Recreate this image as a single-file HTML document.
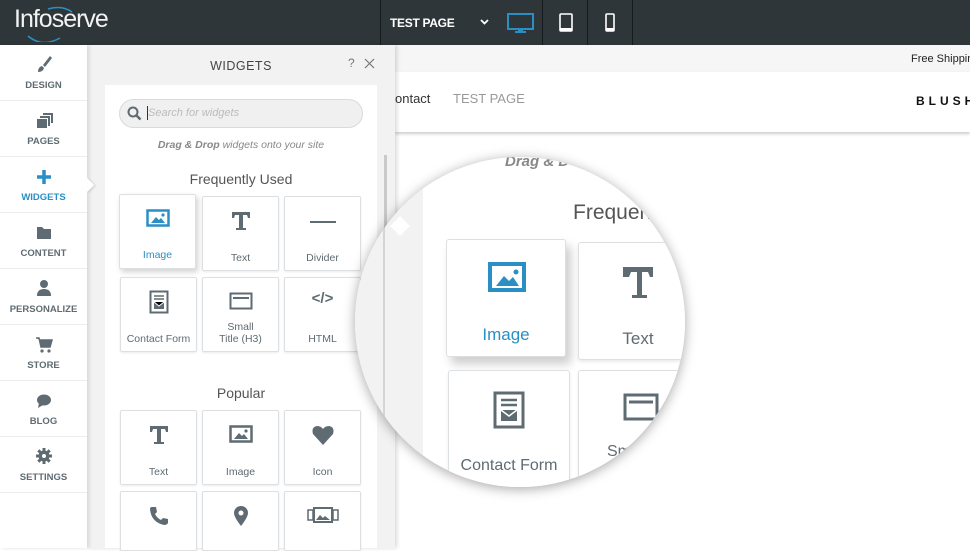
<!DOCTYPE html>
<html><head><style>
*{margin:0;padding:0;box-sizing:border-box}
body{width:970px;height:548px;overflow:hidden;position:relative;background:#fff;font-family:"Liberation Sans",sans-serif;color:#5f6b72}
.a{position:absolute}
#top{left:0;top:0;width:970px;height:45px;background:#2f363a}
.sep{top:0;width:1px;height:45px;background:#151a1d}
#side{left:0;top:45px;width:87px;height:503px;background:#fff;box-shadow:2px 0 4px rgba(0,0,0,.12);z-index:3}
.si{position:absolute;left:0;width:87px;height:56px;border-bottom:1px solid #ececec;text-align:center;font-size:9.5px;font-weight:bold;color:#5f6b72}
.si svg{position:absolute;left:35px;top:9px}
.si span{position:absolute;left:0;right:0;top:35px}
#panel{left:87px;top:45px;width:308px;height:503px;background:#f2f2f2;box-shadow:2px 0 4px rgba(0,0,0,.15);z-index:2}
#card{left:105px;top:85px;width:272px;height:463px;background:#fff;z-index:3}
.tile{position:absolute;width:77px;height:75px;background:#fff;border:1px solid #dde0e2;border-radius:2px;box-shadow:0 1px 2px rgba(0,0,0,.08);text-align:center;font-size:10.5px;color:#5f6b72}
.tile svg{position:absolute;left:50%;transform:translateX(-50%);top:14px}
.tile span{position:absolute;left:0;right:0;top:55px;line-height:12px}
#lens{left:355px;top:157px;width:330px;height:330px;border-radius:50%;overflow:hidden;background:#fff;box-shadow:0 2px 12px rgba(0,0,0,.35);z-index:5}
.bt{position:absolute;background:#fff;border:1px solid #dde0e2;border-radius:3px;box-shadow:0 2px 3px rgba(0,0,0,.08)}
</style></head><body>
<div id="top" class="a">
 <div class="a" style="left:14px;top:5px;font-size:25px;color:#f2f2f2;letter-spacing:-1px">Infoserve</div>
 <svg class="a" style="left:20px;top:6px" width="80" height="36"><path d="M28 3 Q42 -1 52 6" stroke="#2a8fc4" stroke-width="1.5" fill="none"/><path d="M8 30 Q22 42 40 32" stroke="#2a8fc4" stroke-width="1.5" fill="none"/></svg>
 <div class="a sep" style="left:380px"></div>
 <div class="a" style="left:390px;top:16px;color:#fff;font-size:12px;font-weight:bold;letter-spacing:-0.3px">TEST PAGE</div>
 <svg class="a" style="left:480px;top:19px" width="9" height="6"><path d="M1 1 L4.5 4.5 L8 1" stroke="#fff" stroke-width="1.8" fill="none"/></svg>
 <svg class="a" style="left:507px;top:13px" width="28" height="20"><rect x="1" y="1" width="25" height="15" stroke="#2a8fc4" stroke-width="2" fill="none"/><rect x="11" y="16" width="5" height="2" fill="#2a8fc4"/><rect x="8" y="18" width="11" height="2" fill="#2a8fc4"/></svg>
 <div class="a sep" style="left:542px"></div>
 <svg class="a" style="left:559px;top:13px" width="14" height="19"><rect x="1" y="1" width="12" height="17" rx="1" stroke="#fff" stroke-width="1.6" fill="none"/><rect x="1" y="15" width="12" height="3" fill="#fff"/></svg>
 <div class="a sep" style="left:587px"></div>
 <svg class="a" style="left:605px;top:13px" width="10" height="19"><rect x="1" y="1" width="8" height="17" rx="1" stroke="#fff" stroke-width="1.6" fill="none"/><rect x="1" y="15" width="8" height="3" fill="#fff"/></svg>
 <div class="a sep" style="left:632px"></div>
</div>

<div id="side" class="a">
 <div class="si" style="top:0"><svg width="18" height="20"><path d="M15 2 L8 11 L10 13 L17 4Z M7 12 Q3 13 3 18 Q8 18 9 14Z" fill="#5f6b72"/></svg><span>DESIGN</span></div>
 <div class="si" style="top:56px"><svg width="18" height="18" style="top:12px"><rect x="2" y="6" width="10" height="9" fill="#5f6b72"/><path d="M5 4h9v9M8 1h9v9" stroke="#5f6b72" stroke-width="2" fill="none"/></svg><span>PAGES</span></div>
 <div class="si" style="top:112px;color:#2a8fc4"><svg width="18" height="18" style="top:11px"><path d="M9 2v14M2 9h14" stroke="#2a8fc4" stroke-width="3.5"/></svg><span>WIDGETS</span></div>
 <div class="si" style="top:168px"><svg width="18" height="16" style="top:12px"><path d="M2 2h5l2 2h7v10H2Z" fill="#5f6b72"/></svg><span>CONTENT</span></div>
 <div class="si" style="top:224px"><svg width="18" height="18" style="top:10px"><circle cx="9" cy="5" r="4" fill="#5f6b72"/><path d="M2 17 Q2 10 9 10 Q16 10 16 17Z" fill="#5f6b72"/></svg><span>PERSONALIZE</span></div>
 <div class="si" style="top:280px"><svg width="18" height="18" style="top:11px"><path d="M1 2h3l2 9h9l2-7H5" fill="#5f6b72" stroke="#5f6b72" stroke-width="1.5"/><circle cx="7" cy="15" r="1.6" fill="#5f6b72"/><circle cx="14" cy="15" r="1.6" fill="#5f6b72"/></svg><span>STORE</span></div>
 <div class="si" style="top:336px"><svg width="18" height="18" style="top:11px"><ellipse cx="9" cy="8" rx="7" ry="5.5" fill="#5f6b72"/><path d="M4 11 L3 16 L8 13Z" fill="#5f6b72"/></svg><span>BLOG</span></div>
 <div class="si" style="top:392px"><svg width="18" height="18" style="top:10px"><circle cx="9" cy="9" r="5.5" fill="#5f6b72"/><path d="M9 1v16M1 9h16M3.3 3.3l11.4 11.4M14.7 3.3L3.3 14.7" stroke="#5f6b72" stroke-width="3"/><circle cx="9" cy="9" r="2" fill="#fff"/></svg><span>SETTINGS</span></div>
 <div class="a" style="left:82px;top:135px;width:10px;height:10px;background:#fff;transform:rotate(45deg);box-shadow:2px -1px 2px rgba(0,0,0,.1)"></div>
</div>

<div id="panel" class="a">
 <div class="a" style="left:0;right:0;top:14px;text-align:center;font-size:12.5px;color:#444;letter-spacing:.5px">WIDGETS</div>
 <div class="a" style="left:261px;top:11px;font-size:12px;color:#777">?</div>
 <svg class="a" style="left:277px;top:13px" width="11" height="11"><path d="M1 1L10 10M10 1L1 10" stroke="#777" stroke-width="1.2"/></svg>
 <div class="a" style="left:297px;top:110px;width:3px;height:200px;background:#c9c9c9"></div>
</div>
<div id="card" class="a">
 <div class="a" style="left:14px;top:14px;width:244px;height:29px;border:1px solid #d8dadb;border-radius:15px;background:#f0f0f0"></div>
 <svg class="a" style="left:22px;top:21px" width="15" height="15"><circle cx="6" cy="6" r="4.5" stroke="#5f6b72" stroke-width="2" fill="none"/><path d="M9.5 9.5L13.5 13.5" stroke="#5f6b72" stroke-width="2.5"/></svg>
 <div class="a" style="left:42px;top:21px;width:1px;height:14px;background:#333"></div>
 <div class="a" style="left:43px;top:22px;font-size:11px;color:#bbb;font-style:italic">Search for widgets</div>
 <div class="a" style="left:0;right:0;top:54px;text-align:center;font-size:10.5px;color:#888;font-style:italic"><b>Drag &amp; Drop</b> widgets onto your site</div>
 <div class="a" style="left:0;right:0;top:86px;text-align:center;font-size:14px;color:#555">Frequently Used</div>
 <div class="a" style="left:0;right:0;top:300px;text-align:center;font-size:14px;color:#555">Popular</div>
</div>
<div class="a" style="left:0;top:0;z-index:4">
 <div class="tile" style="left:119px;top:194px;box-shadow:2px 3px 6px rgba(0,0,0,.18);color:#2a8fc4"><svg width="24" height="18"><rect x="1.5" y="1.5" width="21" height="15" stroke="#2a8fc4" stroke-width="2.5" fill="none"/><path d="M5 14 L10 8 L13 11 L15 9 L19 14Z" fill="#2a8fc4"/><circle cx="17" cy="6" r="1.6" fill="#2a8fc4"/></svg><span style="top:54px">Image</span></div>
 <div class="tile" style="left:202px;top:196px"><svg width="22" height="22" style="top:13px"><path d="M2 2h18v6h-2l-1-3h-4v13h3v2H6v-2h3V5H5L4 8H2Z" fill="#5f6b72"/></svg><span>Text</span></div>
 <div class="tile" style="left:284px;top:196px"><svg width="28" height="10" style="top:20px"><path d="M1 5h26" stroke="#5f6b72" stroke-width="2"/></svg><span>Divider</span></div>
 <div class="tile" style="left:120px;top:277px"><svg width="20" height="24" style="top:12px"><rect x="1.5" y="1.5" width="17" height="21" stroke="#5f6b72" stroke-width="2" fill="none"/><path d="M5 6h10M5 9h10" stroke="#5f6b72" stroke-width="1.5"/><rect x="5" y="12" width="10" height="7" fill="#5f6b72"/><path d="M5 12l5 4 5-4" stroke="#fff" stroke-width="1"/></svg><span>Contact Form</span></div>
 <div class="tile" style="left:202px;top:277px"><svg width="24" height="18" style="top:14px"><rect x="1.5" y="1.5" width="21" height="15" stroke="#5f6b72" stroke-width="2" fill="none"/><path d="M4 6h16" stroke="#5f6b72" stroke-width="2"/></svg><span style="top:43px">Small<br>Title (H3)</span></div>
 <div class="tile" style="left:284px;top:277px"><div class="a" style="left:0;right:0;top:12px;font-size:15px;font-weight:bold;color:#5f6b72">&lt;/&gt;</div><span>HTML</span></div>
 <div class="tile" style="left:120px;top:410px"><svg width="22" height="22" style="top:13px"><path d="M2 2h18v6h-2l-1-3h-4v13h3v2H6v-2h3V5H5L4 8H2Z" fill="#5f6b72"/></svg><span>Text</span></div>
 <div class="tile" style="left:202px;top:410px"><svg width="24" height="18"><rect x="1.5" y="1.5" width="21" height="15" stroke="#5f6b72" stroke-width="2.5" fill="none"/><path d="M5 14 L10 8 L13 11 L15 9 L19 14Z" fill="#5f6b72"/><circle cx="17" cy="6" r="1.6" fill="#5f6b72"/></svg><span>Image</span></div>
 <div class="tile" style="left:284px;top:410px"><svg width="24" height="22" style="top:13px"><path d="M12 21 L2 10 Q0 3 6 2 Q10 2 12 5 Q14 2 18 2 Q24 3 22 10Z" fill="#5f6b72"/></svg><span>Icon</span></div>
 <div class="tile" style="left:120px;top:491px;height:60px"><svg width="22" height="22" style="top:13px"><path d="M4 2 L8 2 L9 7 L7 9 Q9 13 13 15 L15 13 L20 14 L20 18 Q19 20 16 20 Q3 17 2 4 Q2 2 4 2Z" fill="#5f6b72"/></svg></div>
 <div class="tile" style="left:202px;top:491px;height:60px"><svg width="16" height="22" style="top:13px"><path d="M8 21 Q1 12 1 8 A7 7 0 0 1 15 8 Q15 12 8 21Z" fill="#5f6b72"/><circle cx="8" cy="8" r="2.5" fill="#fff"/></svg></div>
 <div class="tile" style="left:284px;top:491px;height:60px"><svg width="32" height="18" style="top:14px"><rect x="1" y="4" width="5" height="10" stroke="#5f6b72" stroke-width="1.5" fill="none"/><rect x="26" y="4" width="5" height="10" stroke="#5f6b72" stroke-width="1.5" fill="none"/><rect x="7" y="2" width="18" height="14" stroke="#5f6b72" stroke-width="2" fill="none"/><path d="M9 14 L13 9 L16 12 L18 10 L23 14Z" fill="#5f6b72"/></svg></div>
</div>

<div class="a" style="left:395px;top:45px;width:575px;height:27px;background:#f6f6f6"></div>
<div class="a" style="left:911px;top:53px;font-size:11px;color:#222;white-space:nowrap">Free Shipping</div>
<div class="a" style="left:395px;top:72px;width:575px;height:60px;background:#fff;box-shadow:0 2px 3px rgba(0,0,0,.2)"></div>
<div class="a" style="left:395px;top:91px;font-size:13px;color:#333">ontact</div>
<div class="a" style="left:453px;top:91px;font-size:13px;color:#999">TEST PAGE</div>
<div class="a" style="left:916px;top:94px;font-size:12px;color:#111;font-weight:bold;letter-spacing:4px">BLUSH</div>

<div id="lens" class="a">
 <div class="a" style="left:0;top:0;width:68px;height:330px;background:#f2f2f2"></div>
 <div class="a" style="left:28px;top:0;width:2px;height:330px;background:#d5d5d5"></div>
 <div class="a" style="left:38px;top:62px;width:14px;height:14px;background:#fff;transform:rotate(45deg)"></div>
 <div class="a" style="left:150px;top:-4px;font-size:15px;color:#888;font-style:italic;font-weight:bold">Drag &amp; D</div>
 <div class="a" style="left:218px;top:44px;font-size:21px;color:#555;white-space:nowrap">Frequently Used</div>
 <div class="bt" style="left:91px;top:82px;width:120px;height:118px;box-shadow:5px 7px 10px rgba(0,0,0,.2)"><svg class="a" style="left:41px;top:22px" width="38" height="30"><rect x="2" y="2" width="34" height="26" stroke="#2a8fc4" stroke-width="4" fill="none"/><path d="M8 24 L16 14 L21 19 L25 15 L31 24Z" fill="#2a8fc4"/><circle cx="28" cy="10" r="2.5" fill="#2a8fc4"/></svg><div class="a" style="left:0;right:0;top:85px;text-align:center;font-size:17px;color:#2a8fc4">Image</div></div>
 <div class="bt" style="left:223px;top:85px;width:120px;height:118px"><svg class="a" style="left:42px;top:22px" width="34" height="34"><path d="M2 2h30v10h-3l-2-5h-6v23h5v3H11v-3h5V7h-6L8 12H2Z" fill="#5f6b72"/></svg><div class="a" style="left:0;right:0;top:86px;text-align:center;font-size:17px;color:#5f6b72">Text</div></div>
 <div class="bt" style="left:93px;top:213px;width:122px;height:130px"><svg class="a" style="left:44px;top:20px" width="32" height="38"><rect x="2" y="2" width="28" height="34" stroke="#5f6b72" stroke-width="3" fill="none"/><path d="M8 9h16M8 14h16" stroke="#5f6b72" stroke-width="2.5"/><rect x="8" y="19" width="16" height="11" fill="#5f6b72"/><path d="M8 19l8 6 8-6" stroke="#fff" stroke-width="1.5" fill="none"/></svg><div class="a" style="left:0;right:0;top:86px;text-align:center;font-size:16px;color:#5f6b72;white-space:nowrap">Contact Form</div></div>
 <div class="bt" style="left:223px;top:213px;width:120px;height:130px"><svg class="a" style="left:44px;top:22px" width="36" height="28"><rect x="2" y="2" width="32" height="24" stroke="#5f6b72" stroke-width="3" fill="none"/><path d="M6 9h24" stroke="#5f6b72" stroke-width="3"/></svg><div class="a" style="left:28px;top:72px;font-size:16px;color:#5f6b72">Sm</div></div>
</div>
</body></html>
